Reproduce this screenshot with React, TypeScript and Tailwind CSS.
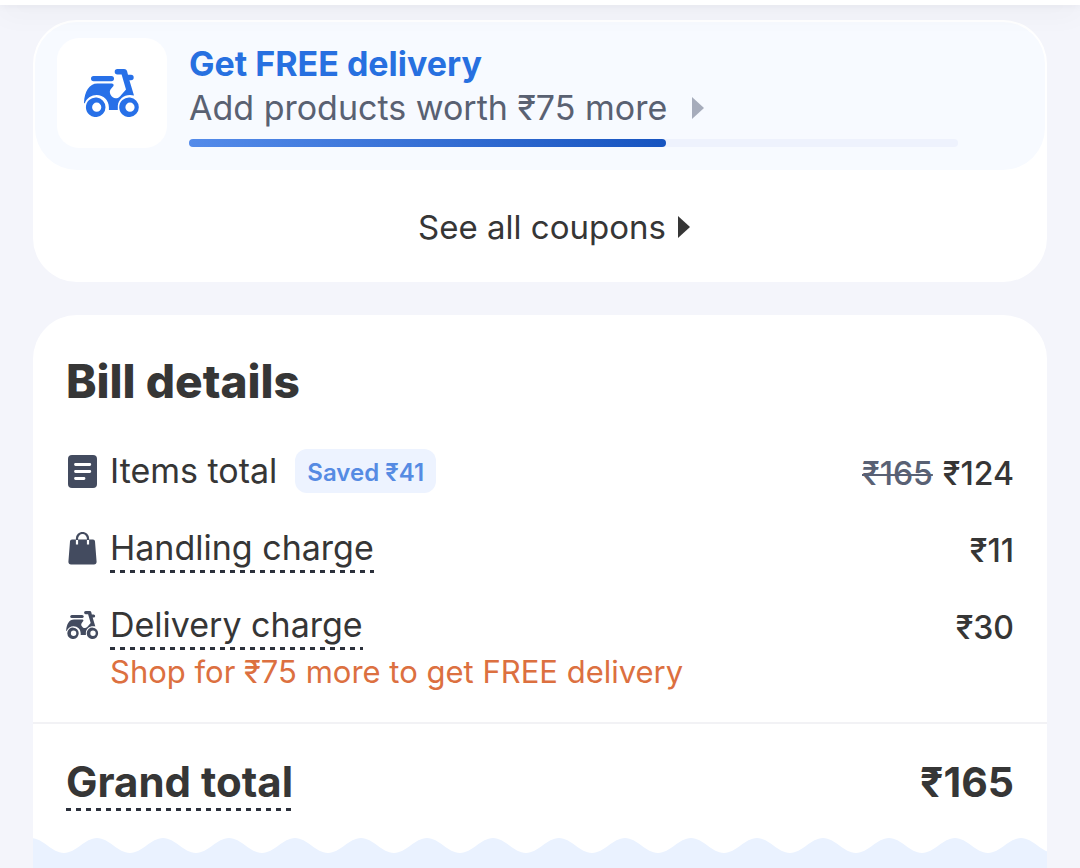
import type { ReactNode } from "react";

function ScooterIcon({ className }: { className: string }) {
  return (
    <svg viewBox="0 0 56 48" className={className} fill="currentColor" aria-hidden="true">
      <rect x="7" y="7" width="23" height="5.2" rx="2.6" />
      <path d="M33.4 0H40c1.6 0 2.6.8 3.1 2.3L44 5.8h3a2.7 2.7 0 0 1 0 5.4h-1.6L50 26.6c-1.3-.4-2.7-.6-4-.6-6.500 0-11.600 4.700-12.200 10.800V41H24.900v-2.700c0-6.800-5.500-12.200-12.200-12.200-5.200 0-9.700 3-11.700 7.700-.3.900-1.100.500-1-.400C.6 22.600 5 14.500 13.500 14.500h14.300c1.900 0 2.300 1.900 1.200 3.100l-1.700 1.900c-1.700 1.900-1.900 4.300-.7 6.300 1.600 2.700 4 4.300 7.200 3.100 1.300-.5 2.400-1.700 3.400-2.900l4.800-5.500L37.600 5.400h-4.200a2.700 2.700 0 0 1 0-5.400Z" />
      <path fillRule="evenodd" d="M12.700 28.500a9.800 9.800 0 1 0 0 19.500 9.800 9.800 0 0 0 0-19.500Zm0 5.100a4.600 4.600 0 1 1 0 9.200 4.600 4.600 0 0 1 0-9.200Z" />
      <path fillRule="evenodd" d="M46 28.500A9.800 9.800 0 1 0 46 48a9.800 9.800 0 0 0 0-19.500Zm0 5.100a4.600 4.600 0 1 1 0 9.200 4.600 4.600 0 0 1 0-9.200Z" />
    </svg>
  );
}

function ReceiptIcon() {
  return (
    <svg viewBox="0 0 29 33" className="h-[33px] w-[29px]" aria-hidden="true">
      <rect width="29" height="33" rx="4" fill="currentColor" />
      <path d="M7.500 9.500h14.300M7.500 16.500h14.300M7.500 23.500h8.500" stroke="white" strokeWidth="2.800" strokeLinecap="round" />
    </svg>
  );
}

function BagIcon() {
  return (
    <svg viewBox="0 0 29 33" className="h-[33px] w-[29px]" aria-hidden="true">
      <path d="M4 7.500h21c1.100 0 1.900.8 2 1.900l1.600 20.400c.1 1.600-1 2.800-2.600 2.800H3c-1.600 0-2.700-1.200-2.600-2.800L2 9.400c.1-1.100.9-1.900 2-1.900Z" fill="currentColor" />
      <path d="M9 7v5.500M20 7v5.500" stroke="white" strokeWidth="2.200" />
      <path d="M9 8V6.500a5.500 5.500 0 0 1 11 0V8" fill="none" stroke="currentColor" strokeWidth="2.200" />
    </svg>
  );
}

function Caret({ className }: { className: string }) {
  return (
    <svg viewBox="0 0 12 22" className={className} fill="currentColor" aria-hidden="true">
      <path d="M0 0 12 11 0 22Z" />
    </svg>
  );
}

function Dashed({ children }: { children: ReactNode }) {
  return (
    <span className="flex flex-col">
      {children}
      <span className="h-[3px] bg-[repeating-linear-gradient(90deg,#2b303b_0_5px,transparent_5px_10px)]" />
    </span>
  );
}

function BillRow({ icon, amount, children }: { icon: ReactNode; amount: ReactNode; children: ReactNode }) {
  return (
    <div className="flex items-start justify-between">
      <dt className="flex items-start">
        <span className="flex h-11 w-11 shrink-0 items-center text-[#434b5f]">
          <span className="flex w-[33px] justify-center">{icon}</span>
        </span>
        {children}
      </dt>
      <dd className="pt-[3px] text-[32px] leading-11 font-medium">{amount}</dd>
    </div>
  );
}

export default function App() {
  return (
    <main className="bg-[#f4f5fb] font-[Inter,sans-serif] text-[#363636]">
      <header className="relative z-10 h-[5px] bg-white shadow-[0_0_8px_rgba(40,35,50,0.08),0_4px_28px_rgba(40,35,50,0.12)]" />
      <div className="flex flex-col gap-[33px] px-[33px] pt-[15px]">
        <section className="rounded-[44px] bg-white p-[2px]">
          <div className="flex h-[148px] items-start gap-[22px] rounded-[42px] bg-[#f7faff] px-[22px] pt-4">
            <div className="flex size-[110px] shrink-0 items-center justify-center rounded-[22px] bg-white">
              <ScooterIcon className="h-12 w-14 text-[#2770e8]" />
            </div>
            <div className="flex min-w-0 flex-1 flex-col pr-[65px] pt-1">
              <h2 className="text-[34px] leading-11 font-bold text-[#2770e0]">Get FREE delivery</h2>
              <button type="button" className="flex items-center gap-[25px] text-left text-[34px] leading-11 text-[#596172]">
                Add products worth ₹75 more
                <Caret className="h-[22px] w-3 text-[#a6acbb]" />
              </button>
              <div className="mt-[9px] h-2 rounded-full bg-[#eef2fd]">
                <div className="h-2 w-[62%] rounded-full bg-linear-to-r from-[#548bea] to-[#1654c0]" />
              </div>
            </div>
          </div>
          <button type="button" className="flex h-[110px] w-full items-center justify-center gap-3 pt-1 pl-7 text-[33px] leading-11">
            See all coupons
            <Caret className="h-[22px] w-3 text-[#363636]" />
          </button>
        </section>

        <section className="overflow-hidden rounded-t-[44px] bg-white">
          <h2 className="px-[33px] pt-[38px] text-[46px] leading-14 font-extrabold">Bill details</h2>
          <dl>
            <div className="flex flex-col gap-[30px] px-[33px] pt-10">
              <BillRow
                icon={<ReceiptIcon />}
                amount={
                  <>
                    <s className="mr-[10px] text-[#596174] decoration-2">₹165</s>₹124
                  </>
                }
              >
                <span className="text-[34px] leading-11">Items total</span>
                <span className="ml-[18px] rounded-xl bg-[#edf3ff] px-3 pt-1 text-[24px] leading-10 font-semibold text-[#568be3]">Saved ₹41</span>
              </BillRow>
              <BillRow icon={<BagIcon />} amount="₹11">
                <Dashed>
                  <span className="text-[34px] leading-11">Handling charge</span>
                </Dashed>
              </BillRow>
              <BillRow icon={<ScooterIcon className="h-7 w-[33px]" />} amount="₹30">
                <span className="flex flex-col items-start">
                  <Dashed>
                    <span className="text-[34px] leading-11">Delivery charge</span>
                  </Dashed>
                  <span className="text-[31px] leading-11 text-[#dc7040]">Shop for ₹75 more to get FREE delivery</span>
                </span>
              </BillRow>
            </div>
            <div className="mt-7 flex items-start justify-between border-t-2 border-[#f2f2f5] px-[33px] pt-8">
              <dt className="text-[42px] leading-13 font-bold">
                <Dashed>Grand total</Dashed>
              </dt>
              <dd className="text-[41px] leading-13 font-bold">₹165</dd>
            </div>
          </dl>
          <svg className="mt-[27px] block h-[30px] w-full" aria-hidden="true">
            <defs>
              <pattern id="bill-wave" x="-2" width="66" height="30" patternUnits="userSpaceOnUse">
                <path d="M0 0C12 0 21 15 33 15S54 0 66 0V30H0Z" fill="#eaf2ff" />
              </pattern>
            </defs>
            <rect width="100%" height="30" fill="url(#bill-wave)" />
          </svg>
        </section>
      </div>
    </main>
  );
}
